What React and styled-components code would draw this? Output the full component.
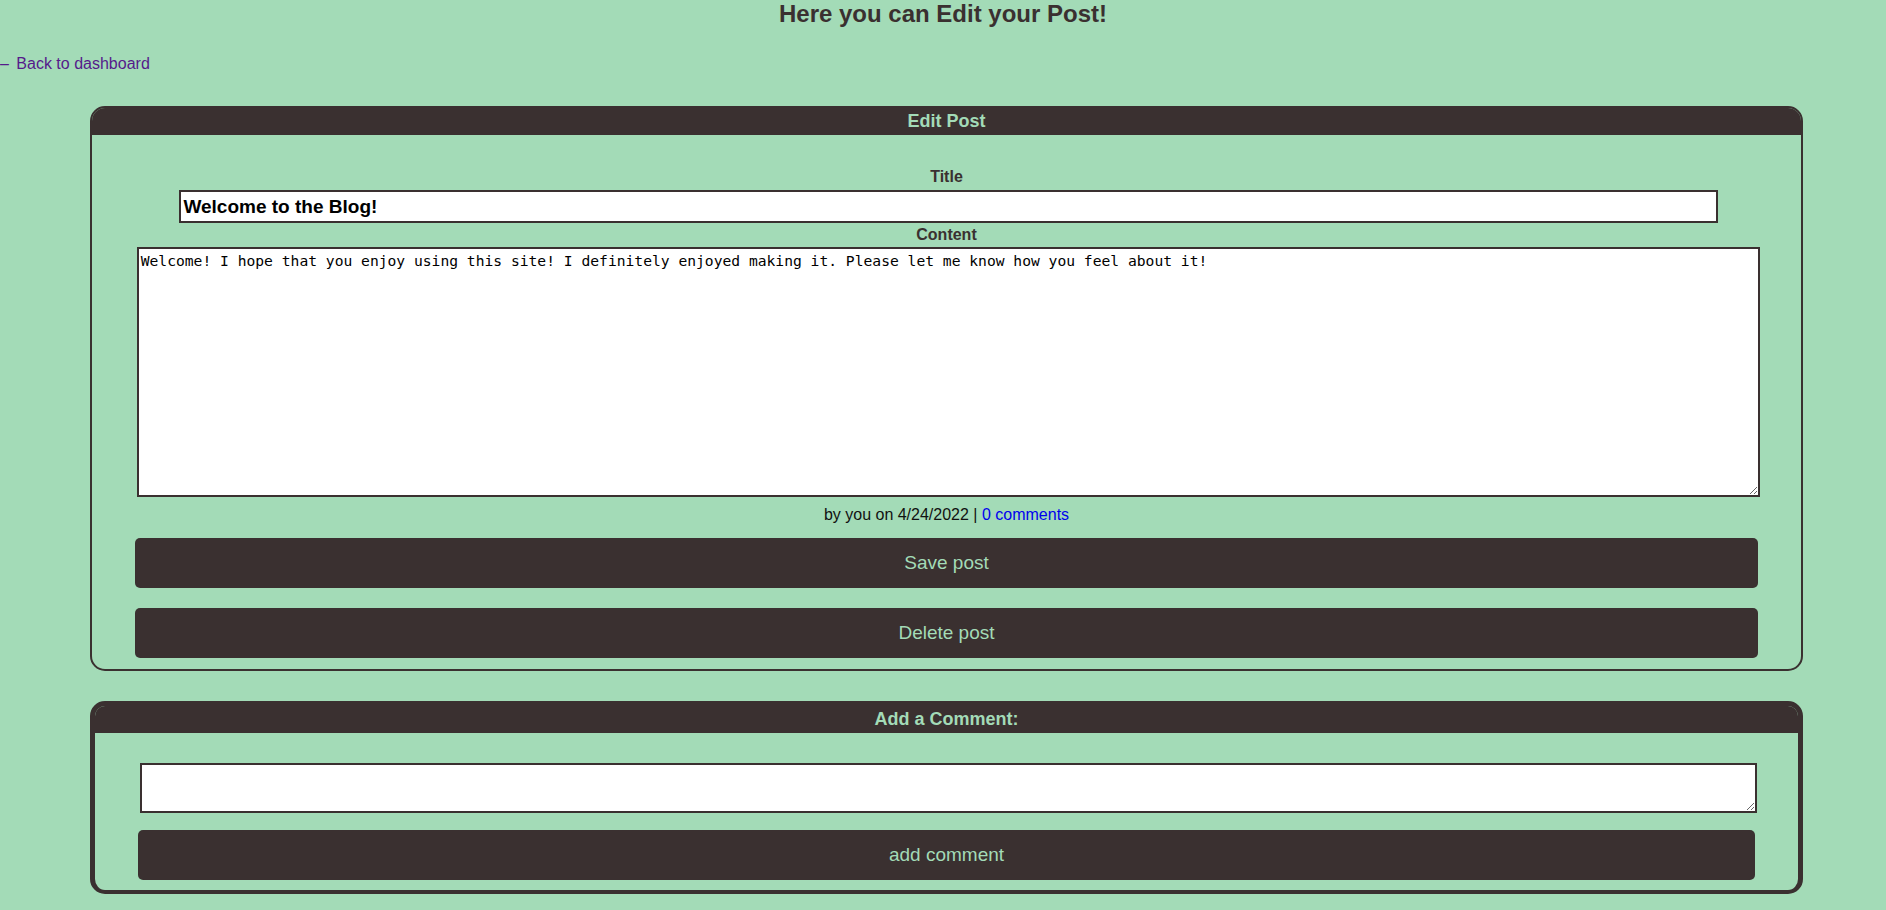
import React from "react";
import styled, { createGlobalStyle } from "styled-components";

const GlobalStyle = createGlobalStyle`
  html, body {
    margin: 0;
    padding: 0;
    background: #a3dbb7;
    font-family: "Liberation Sans", Arial, sans-serif;
  }
  * { box-sizing: border-box; }
`;

const Page = styled.main`
  min-height: 910px;
  padding-bottom: 17px;
`;

const Heading = styled.h2`
  margin: 0;
  font-size: 24px;
  line-height: 27px;
  font-weight: bold;
  text-align: center;
  color: #3a3030;
`;

const BackLink = styled.a`
  display: block;
  margin-top: 28px;
  font-size: 16px;
  line-height: 18px;
  color: #551a8b;
  text-decoration: none;
`;

const Dash = styled.span`
  margin-right: 3px;
`;

const Card = styled.section`
  margin: ${(p) => p.$top}px 83px 0 90px;
  border: solid #3a3030;
  border-width: ${(p) => p.$border};
  border-radius: 15px;
  overflow: hidden;
  padding-bottom: ${(p) => p.$bottom}px;
`;

const CardHeader = styled.header`
  background: #3a3030;
  color: #a3dbb7;
  font-weight: bold;
  font-size: 18px;
  text-align: center;
  height: ${(p) => p.$h}px;
  line-height: ${(p) => p.$h}px;
`;

const Label = styled.label`
  display: block;
  text-align: center;
  font-weight: bold;
  font-size: 16px;
  line-height: 18px;
  color: #3a3030;
  margin-top: ${(p) => p.$top}px;
`;

const TitleInput = styled.input`
  display: block;
  width: 90%;
  height: 33px;
  margin: 4px auto 0 calc(5% + 2px);
  padding: 0 2px;
  border: 2px solid #3a3030;
  background: #fff;
  font-family: "Liberation Sans", Arial, sans-serif;
  font-weight: bold;
  font-size: 19px;
  color: #000;
  outline: none;
`;

const TextArea = styled.textarea`
  display: block;
  width: 95%;
  height: ${(p) => p.$h}px;
  margin: ${(p) => p.$top}px auto 0 calc(2.5% + 2px);
  padding: 3px 2px;
  border: 2px solid #3a3030;
  background: #fff;
  font-family: "DejaVu Sans Mono", "Liberation Mono", monospace;
  font-size: 14.65px;
  color: #000;
  resize: both;
  outline: none;
`;

const Meta = styled.p`
  margin: 9px 0 0;
  text-align: center;
  font-size: 16px;
  line-height: 18px;
  color: #111;

  a {
    color: #0000ee;
    text-decoration: none;
  }
`;

const Button = styled.button`
  display: block;
  width: 95%;
  height: 50px;
  margin: ${(p) => p.$top}px auto 0;
  border: none;
  border-radius: 5px;
  background: #3a3030;
  color: #a3dbb7;
  font-family: "Liberation Sans", Arial, sans-serif;
  font-size: 19px;
  cursor: pointer;
`;

export default function App() {
  return (
    <Page>
      <GlobalStyle />
      <Heading>Here you can Edit your Post!</Heading>
      <BackLink href="#">
        <Dash>–</Dash> Back to dashboard
      </BackLink>

      <Card $top={33} $border="2px" $bottom={11}>
        <CardHeader $h={27}>Edit Post</CardHeader>
        <Label $top={33}>Title</Label>
        <TitleInput defaultValue="Welcome to the Blog!" />
        <Label $top={3}>Content</Label>
        <TextArea
          $h={250}
          $top={3}
          defaultValue="Welcome! I hope that you enjoy using this site! I definitely enjoyed making it. Please let me know how you feel about it!"
        />
        <Meta>
          by you on 4/24/2022 | <a href="#">0 comments</a>
        </Meta>
        <Button $top={14}>Save post</Button>
        <Button $top={20}>Delete post</Button>
      </Card>

      <Card $top={30} $border="5px 5px 4px" $bottom={10}>
        <CardHeader $h={27}>Add a Comment:</CardHeader>
        <TextArea $h={50} $top={30} />
        <Button $top={17}>add comment</Button>
      </Card>
    </Page>
  );
}
